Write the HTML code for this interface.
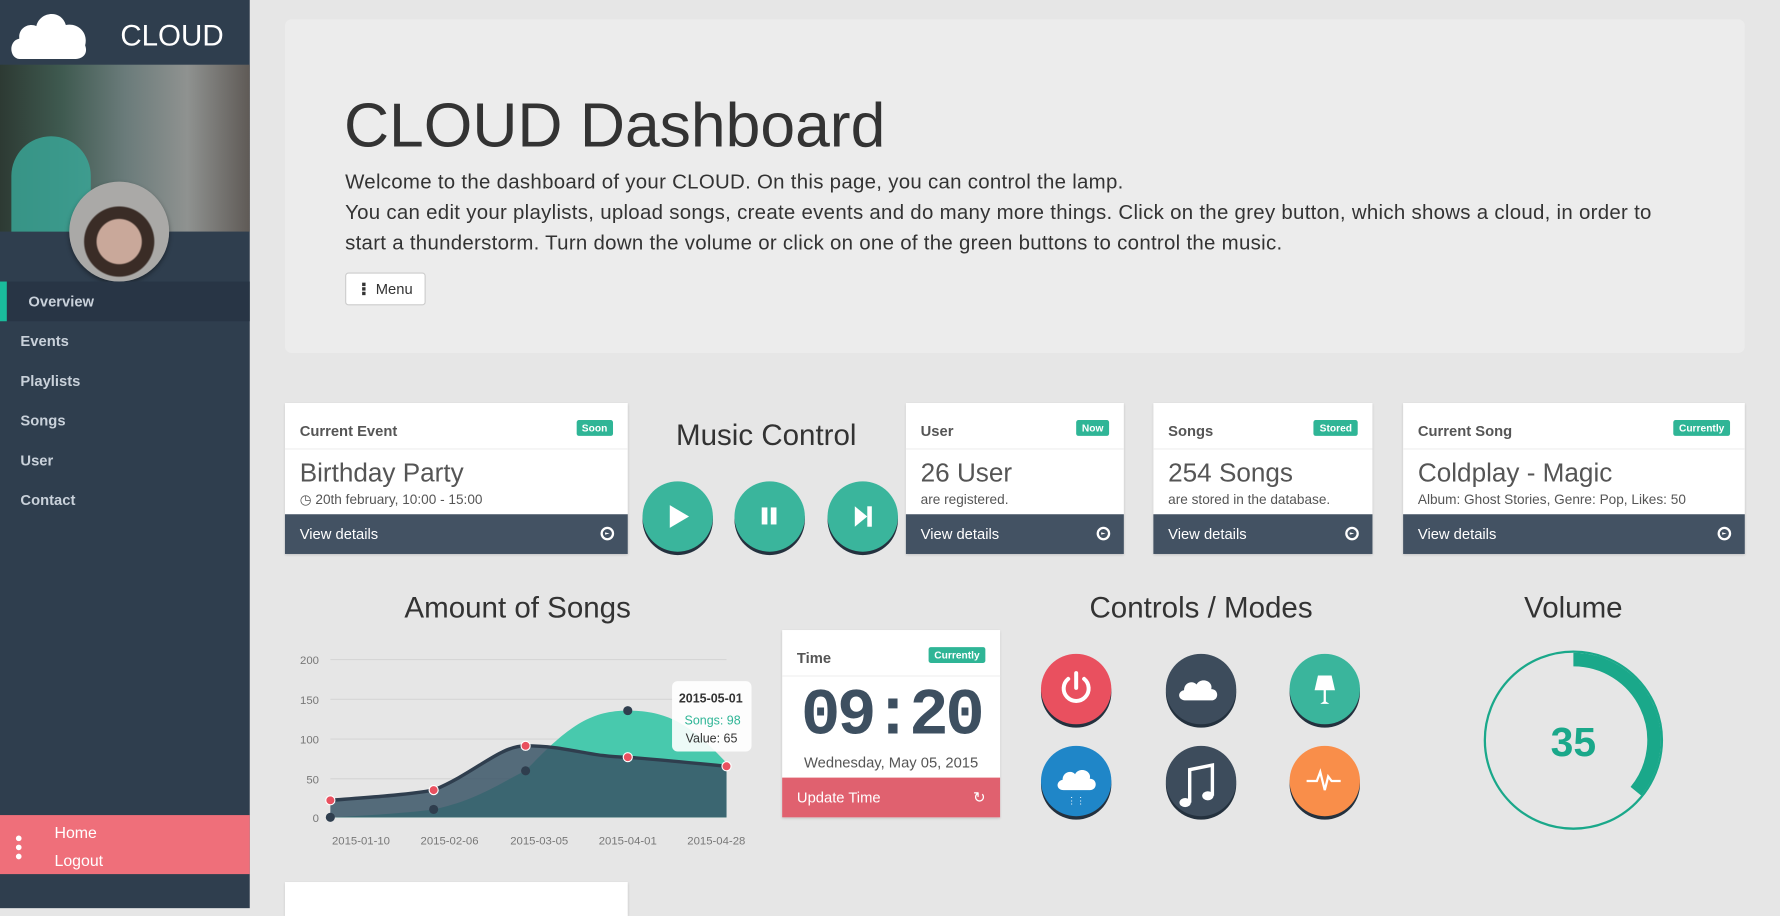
<!DOCTYPE html>
<html><head><meta charset="utf-8">
<style>
*{margin:0;padding:0;box-sizing:border-box}
html,body{width:1780px;height:896px;overflow:hidden;background:#e6e6e6;font-family:"Liberation Sans",sans-serif}
#w{position:absolute;left:0;top:0;width:1568px;height:800px;transform:scale(1.13520);transform-origin:0 0;background:#e6e6e6}
.a{position:absolute}
.side{left:0;top:0;width:220px;height:800px;background:#2f3e4e}
.nav{left:0;width:220px;height:35px;line-height:35px;color:#c9d1da;font-size:13px;padding-left:18px;font-weight:bold}
.card{background:#fff;box-shadow:0 1px 2px rgba(0,0,0,.15)}
.ch{position:absolute;left:0;right:0;top:0;height:41px;border-bottom:1px solid #eee;font-size:13px;color:#555;font-weight:bold;padding:17px 13px}
.badge{position:absolute;right:13px;top:15px;background:#2fb596;color:#fff;font-size:9px;font-weight:bold;padding:2px 5px;border-radius:2px}
.ct{position:absolute;left:13px;top:48px;font-size:23px;color:#555}
.cs{position:absolute;left:13px;top:78px;font-size:12px;color:#555}
.cf{position:absolute;left:0;right:0;bottom:0;height:35px;background:#435263;color:#fff;font-size:13px;line-height:35px;padding-left:13px}
.cf i{position:absolute;right:12px;top:11px;width:12px;height:12px;border:2px solid #fff;border-radius:50%}
.cf i:after{content:"";position:absolute;left:2px;top:3px;border-left:4px solid #fff;border-top:1.5px solid transparent;border-bottom:1.5px solid transparent}
.h2{font-size:26px;color:#333;text-align:center}
.btn{width:62px;height:62px;border-radius:50%;box-shadow:0 3px 0 #24313e}
</style></head><body><div id="w">
<div class="a side"></div>
<svg class="a" style="left:8px;top:6px" width="70" height="46" viewBox="0 0 70 46"><path d="M10 46 C0 46 -1 30 9 28 C8 18 18 14 24 17 C27 4 46 2 50 16 C60 14 70 22 67 34 C70 42 64 46 58 46 Z" fill="#fff"/></svg>
<div class="a" style="left:106px;top:16px;color:#fff;font-size:26px">CLOUD</div>
<div class="a" style="left:0;top:57px;width:220px;height:147px;background:linear-gradient(90deg,#2d3a33 0%,#3f5a50 25%,#6a7b7a 50%,#8f9290 75%,#5f5a56 100%)"></div>
<div class="a" style="left:10px;top:120px;width:70px;height:84px;border-radius:40px 40px 0 0;background:#3aa99a;opacity:.8"></div>
<div class="a" style="left:61px;top:160px;width:88px;height:88px;border-radius:50%;background:radial-gradient(circle at 50% 60%,#c9a89a 0 28%,#3a2c26 30% 44%,#aaa9a7 46%);box-shadow:0 2px 4px rgba(0,0,0,.4)"></div>
<div class="a" style="left:0;top:248px;width:220px;height:35px;background:#283545"></div>
<div class="a" style="left:0;top:248px;width:6px;height:35px;background:#1abc9c"></div>
<div class="a nav" style="top:248px;padding-left:25px">Overview</div>
<div class="a nav" style="top:283px">Events</div>
<div class="a nav" style="top:318px">Playlists</div>
<div class="a nav" style="top:353px">Songs</div>
<div class="a nav" style="top:388px">User</div>
<div class="a nav" style="top:423px">Contact</div>
<div class="a" style="left:0;top:718px;width:220px;height:52px;background:#ef6f7a"></div>
<div class="a" style="left:14px;top:736px;width:5px;height:5px;border-radius:50%;background:#fff;box-shadow:0 8px 0 #fff,0 16px 0 #fff"></div>
<div class="a" style="left:48px;top:721px;color:#fff;font-size:14px;line-height:25px">Home<br>Logout</div>

<div class="a" style="left:251px;top:17px;width:1286px;height:294px;background:#ececec;border-radius:6px"></div>
<div class="a" style="left:303px;top:78px;font-size:55px;color:#333">CLOUD Dashboard</div>
<div class="a" style="left:304px;top:147px;width:1240px;font-size:18px;line-height:27px;color:#333;letter-spacing:0.25px;white-space:nowrap">Welcome to the dashboard of your CLOUD. On this page, you can control the lamp.<br>You can edit your playlists, upload songs, create events and do many more things. Click on the grey button, which shows a cloud, in order to<br>start a thunderstorm. Turn down the volume or click on one of the green buttons to control the music.</div>
<div class="a" style="left:304px;top:240px;width:71px;height:29px;background:#fff;border:1px solid #ccc;border-radius:3px;font-size:13px;color:#333;line-height:27px;padding-left:26px">Menu</div>
<div class="a" style="left:319px;top:249px;width:3px;height:3px;background:#333;box-shadow:0 4px 0 #333,0 8px 0 #333"></div>

<div class="a card" style="left:251px;top:355px;width:302px;height:133px"><div class="ch">Current Event<span class="badge">Soon</span></div><div class="ct">Birthday Party</div><div class="cs">&#9719; 20th february, 10:00 - 15:00</div><div class="cf">View details<i></i></div></div>
<div class="a h2" style="left:565px;top:368px;width:220px">Music Control</div>
<div class="a btn" style="left:566px;top:424px;background:#3ab59c"></div>
<div class="a btn" style="left:647px;top:424px;background:#3ab59c"></div>
<div class="a btn" style="left:729px;top:424px;background:#3ab59c"></div>
<div class="a" style="left:590px;top:445px;border-left:17px solid #fff;border-top:10px solid transparent;border-bottom:10px solid transparent"></div>
<div class="a" style="left:671px;top:447px;width:5px;height:15px;background:#fff;box-shadow:8px 0 0 #fff"></div>
<div class="a" style="left:753px;top:446px;border-left:11px solid #fff;border-top:9px solid transparent;border-bottom:9px solid transparent"></div>
<div class="a" style="left:764px;top:446px;width:4px;height:18px;background:#fff"></div>
<div class="a card" style="left:798px;top:355px;width:192px;height:133px"><div class="ch">User<span class="badge">Now</span></div><div class="ct">26 User</div><div class="cs">are registered.</div><div class="cf">View details<i></i></div></div>
<div class="a card" style="left:1016px;top:355px;width:193px;height:133px"><div class="ch">Songs<span class="badge">Stored</span></div><div class="ct">254 Songs</div><div class="cs">are stored in the database.</div><div class="cf">View details<i></i></div></div>
<div class="a card" style="left:1236px;top:355px;width:301px;height:133px"><div class="ch">Current Song<span class="badge">Currently</span></div><div class="ct">Coldplay - Magic</div><div class="cs">Album: Ghost Stories, Genre: Pop, Likes: 50</div><div class="cf">View details<i></i></div></div>

<div class="a h2" style="left:306px;top:520px;width:300px">Amount of Songs</div>
<svg class="a" style="left:250px;top:570px" width="420" height="185" viewBox="250 570 420 185" font-family="Liberation Sans" font-size="10" fill="#777">
<g stroke="#d6d6d6"><line x1="291" y1="581" x2="640" y2="581"/><line x1="291" y1="616" x2="640" y2="616"/><line x1="291" y1="651" x2="640" y2="651"/><line x1="291" y1="686" x2="640" y2="686"/><line x1="291" y1="720" x2="640" y2="720"/></g>
<text x="281" y="585" text-anchor="end">200</text><text x="281" y="620" text-anchor="end">150</text><text x="281" y="655" text-anchor="end">100</text><text x="281" y="690" text-anchor="end">50</text><text x="281" y="724" text-anchor="end">0</text>
<path d="M291 720 C330 718 360 716 382 713 C420 705 440 690 463 679 C500 640 520 626 553 626 C590 626 610 640 640 672 L640 720 Z" fill="#48c9ad"/>
<path d="M291 705 C330 702 360 700 382 696 C420 680 440 657 463 657 C500 657 520 667 553 667 C590 670 610 672 640 675 L640 720 L291 720 Z" fill="#3a5566" fill-opacity=".85"/>
<path d="M291 705 C330 702 360 700 382 696 C420 680 440 657 463 657 C500 657 520 667 553 667 C590 670 610 672 640 675" fill="none" stroke="#2f3e4e" stroke-width="3"/>
<g fill="#2f3e4e"><circle cx="291" cy="720" r="4"/><circle cx="382" cy="713" r="4"/><circle cx="463" cy="679" r="4"/><circle cx="553" cy="626" r="4"/></g>
<g fill="#e9505f" stroke="#fff"><circle cx="291" cy="705" r="4"/><circle cx="382" cy="696" r="4"/><circle cx="463" cy="657" r="4"/><circle cx="553" cy="667" r="4"/><circle cx="640" cy="675" r="4"/></g>
<rect x="592" y="600" width="70" height="62" rx="5" fill="#fff" fill-opacity=".9"/>
<text x="598" y="619" fill="#333" font-weight="bold" font-size="11">2015-05-01</text><text x="603" y="638" fill="#2fb596" font-size="11">Songs: 98</text><text x="604" y="654" fill="#333" font-size="11">Value: 65</text>
<text x="318" y="744" text-anchor="middle">2015-01-10</text><text x="396" y="744" text-anchor="middle">2015-02-06</text><text x="475" y="744" text-anchor="middle">2015-03-05</text><text x="553" y="744" text-anchor="middle">2015-04-01</text><text x="631" y="744" text-anchor="middle">2015-04-28</text>
</svg>

<div class="a card" style="left:689px;top:555px;width:192px;height:165px"><div class="ch">Time<span class="badge">Currently</span></div>
<div class="a" style="left:0;width:192px;top:44px;text-align:center;font-family:'Liberation Mono',monospace;font-weight:bold;font-size:58px;color:#3d4f60;letter-spacing:-3px">09:20</div>
<div class="a" style="left:0;width:192px;top:109px;text-align:center;font-size:13px;color:#555">Wednesday, May 05, 2015</div>
<div class="cf" style="background:#e0616f">Update Time<span style="position:absolute;right:13px">&#8635;</span></div></div>

<div class="a h2" style="left:908px;top:520px;width:300px">Controls / Modes</div>
<div class="a btn" style="left:917px;top:576px;background:#e9505f"></div>
<div class="a btn" style="left:1027px;top:576px;background:#3d4c5c"></div>
<div class="a btn" style="left:1136px;top:576px;background:#3ab59c"></div>
<div class="a btn" style="left:917px;top:657px;background:#1f86c8"></div>
<div class="a btn" style="left:1027px;top:657px;background:#3d4c5c"></div>
<div class="a btn" style="left:1136px;top:657px;background:#f98e4a"></div>
<svg class="a" style="left:917px;top:576px" width="280" height="143" viewBox="0 0 280 143">
<path d="M24 22 A11 11 0 1 0 38 22" fill="none" stroke="#fff" stroke-width="3.5" stroke-linecap="round"/><line x1="31" y1="17" x2="31" y2="30" stroke="#fff" stroke-width="3.5" stroke-linecap="round"/>
<path d="M128 41 C120 41 120 33 126 32 C126 25 134 23 137 27 C141 20 152 24 150 31 C157 31 157 41 150 41 Z" fill="#fff"/>
<path d="M244 19 L256 19 L259 32 L241 32 Z M249 32 L249 42 L246 44 L254 44 L251 42 L251 32" fill="#fff"/>
<path d="M20 120 C13 120 13 112 19 111 C19 104 27 102 30 106 C34 99 45 103 43 110 C50 110 50 120 43 120 Z" fill="#fff"/>
<text x="23" y="132" fill="#fff" font-size="8">&#8942;&#8942;</text>
<path d="M131 131 L131 102 L151 98 L151 125" fill="none" stroke="#fff" stroke-width="3"/><ellipse cx="127" cy="131" rx="5" ry="4" fill="#fff"/><ellipse cx="147" cy="125" rx="5" ry="4" fill="#fff"/>
<path d="M234 112 L243 112 L246 104 L250 120 L253 108 L256 112 L264 112" fill="none" stroke="#fff" stroke-width="2"/>
</svg>

<div class="a h2" style="left:1286px;top:520px;width:200px">Volume</div>
<svg class="a" style="left:1300px;top:566px" width="172" height="172" viewBox="0 0 172 172">
<circle cx="86" cy="86" r="78" fill="none" stroke="#1aa88a" stroke-width="2"/>
<path d="M86 15 A71 71 0 0 1 141 131" fill="none" stroke="#1aa88a" stroke-width="12"/>
<text x="86" y="100" text-anchor="middle" font-family="Liberation Sans" font-weight="bold" font-size="36" fill="#1aa88a">35</text>
</svg>
<div class="a card" style="left:251px;top:777px;width:302px;height:30px"></div>
</div></body></html>
